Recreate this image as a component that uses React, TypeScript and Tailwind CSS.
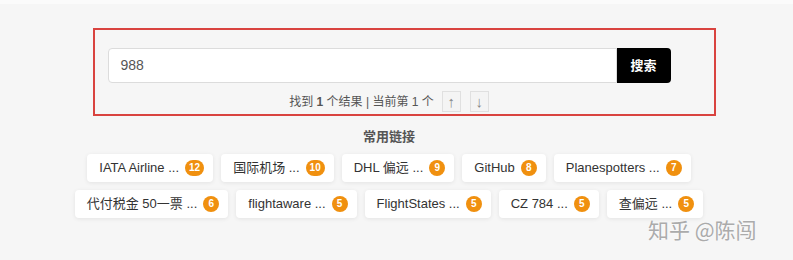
import React from "react";

const rowOne = [
  { name: "IATA Airline ...", count: 12 },
  { name: "国际机场 ...", count: 10 },
  { name: "DHL 偏远 ...", count: 9 },
  { name: "GitHub", count: 8 },
  { name: "Planespotters ...", count: 7 },
];

const rowTwo = [
  { name: "代付税金 50一票 ...", count: 6 },
  { name: "flightaware ...", count: 5 },
  { name: "FlightStates ...", count: 5 },
  { name: "CZ 784 ...", count: 5 },
  { name: "查偏远 ...", count: 5 },
];

const font = { fontFamily: '"Liberation Sans", Arial, "Noto Sans CJK SC", sans-serif' };

function LinkPill({ name, count }: { name: string; count: number }) {
  return (
    <a className="flex h-[28px] items-center gap-[6px] rounded-[4px] bg-white pl-[12px] pr-[9px] text-[13px] text-[#333] shadow-[0_1px_4px_rgba(0,0,0,0.08)]">
      <span>{name}</span>
      <span className="flex h-[16px] min-w-[16px] items-center justify-center rounded-full bg-[#f0900f] px-[4px] text-[10px] font-bold leading-none text-white">
        {count}
      </span>
    </a>
  );
}

export default function App() {
  return (
    <div className="relative h-[260px] w-[793px] overflow-hidden bg-[#f6f6f6]" style={font}>
      <div className="h-[4px] bg-[#fbfbfb]" />
      <div className="flex w-[778px] flex-col items-center">
        <div className="mt-[44px] flex h-[35px] w-[563px]">
          <div className="flex flex-1 items-center rounded-l-[4px] border border-[#dcdcdc] bg-white pl-[12px] text-[14px] text-[#555]">
            988
          </div>
          <button className="w-[54px] rounded-r-[4px] bg-black text-[13px] font-bold text-white">搜索</button>
        </div>

        <div className="mt-[8px] flex h-[21px] items-center gap-[8px] text-[12px] text-[#555]">
          <span>
            找到 <b>1</b> 个结果 | 当前第 1 个
          </span>
          <button className="h-[21px] w-[19px] border border-[#e0e0e0] bg-[#f4f4f4] text-[15px] font-light leading-none text-[#888]">↑</button>
          <button className="ml-[1px] h-[21px] w-[19px] border border-[#e0e0e0] bg-[#f4f4f4] text-[15px] font-light leading-none text-[#888]">↓</button>
        </div>

        <h3 className="mt-[17px] text-[13px] font-bold leading-[16px] text-[#555]">常用链接</h3>

        <div className="mt-[9px] flex gap-[8px]">
          {rowOne.map((l) => (
            <LinkPill key={l.name} {...l} />
          ))}
        </div>
        <div className="mt-[8px] flex gap-[8px]">
          {rowTwo.map((l) => (
            <LinkPill key={l.name} {...l} />
          ))}
        </div>
      </div>

      {/* annotation frame */}
      <div className="pointer-events-none absolute left-[93px] top-[28px] h-[88px] w-[623px] border-[2.5px] border-[#d9433f]" />

      <div
        className="pointer-events-none absolute left-[648px] top-[214px] text-[21px] text-[#ababab] [text-shadow:0_0_2px_#fff]"
        style={{ fontFamily: '"Noto Sans CJK SC", sans-serif' }}
      >
        知乎 @陈闯
      </div>
    </div>
  );
}
